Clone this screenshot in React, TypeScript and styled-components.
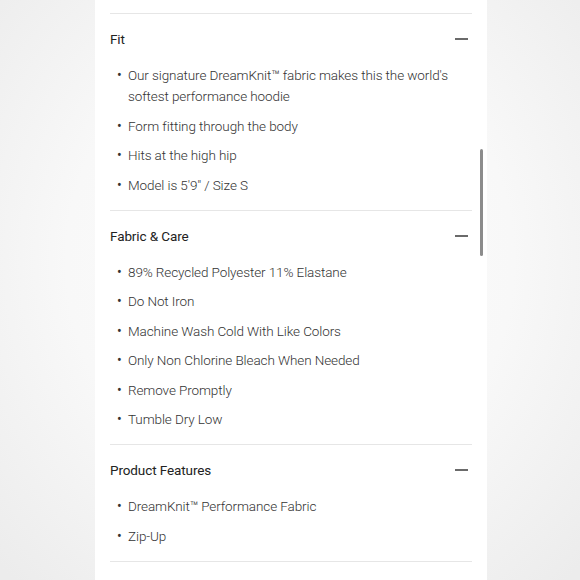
import styled, { createGlobalStyle } from 'styled-components'

const GlobalStyle = createGlobalStyle`
  html, body {
    margin: 0;
    padding: 0;
  }
  body {
    font-family: Roboto, 'Noto Sans', 'Liberation Sans', sans-serif;
    -webkit-font-smoothing: antialiased;
  }
`

const Backdrop = styled.div`
  width: 580px;
  height: 580px;
  overflow: hidden;
  display: flex;
  justify-content: center;
  background: radial-gradient(
    ellipse 70% 75% at 50% 45%,
    #fdfdfd 0%,
    #f8f8f8 55%,
    #ececec 100%
  );
`

const Panel = styled.div`
  position: relative;
  width: 362px;
  margin-left: 2px;
  padding: 13px 15px 0;
  background: #fff;
`

const Scrollbar = styled.div`
  position: absolute;
  right: 4px;
  top: 149px;
  width: 3px;
  height: 107px;
  border-radius: 2px;
  background: #8c8c8c;
`

const Section = styled.section`
  border-top: 1px solid #e6e6e6;
`

const Header = styled.div`
  height: 50px;
  display: flex;
  align-items: center;
  justify-content: space-between;
  padding-right: 4px;
  font-size: 13.5px;
  letter-spacing: -0.1px;
  color: #222;
`

const Minus = styled.span`
  display: block;
  width: 13px;
  height: 2px;
  background: #6a6a6a;
`

const List = styled.ul`
  list-style: none;
  margin: 0;
  padding: 1px 0 14px;
`

const Item = styled.li`
  position: relative;
  padding-left: 18px;
  margin-bottom: 8.5px;
  font-size: 13.5px;
  font-weight: 300;
  letter-spacing: -0.1px;
  line-height: 21px;
  color: #333;

  &:last-child {
    margin-bottom: 0;
  }

  &::before {
    content: '•';
    position: absolute;
    left: 7px;
    top: 0;
    font-size: 14px;
    font-weight: 400;
    color: #333;
  }
`

const sections = [
  {
    title: 'Fit',
    items: [
      'Our signature DreamKnit™ fabric makes this the world\'s softest performance hoodie',
      'Form fitting through the body',
      'Hits at the high hip',
      'Model is 5\'9" / Size S',
    ],
  },
  {
    title: 'Fabric & Care',
    items: [
      '89% Recycled Polyester 11% Elastane',
      'Do Not Iron',
      'Machine Wash Cold With Like Colors',
      'Only Non Chlorine Bleach When Needed',
      'Remove Promptly',
      'Tumble Dry Low',
    ],
  },
  {
    title: 'Product Features',
    items: ['DreamKnit™ Performance Fabric', 'Zip-Up'],
  },
]

export default function App() {
  return (
    <>
      <GlobalStyle />
      <Backdrop>
        <Panel>
          {sections.map((s) => (
            <Section key={s.title}>
              <Header>
                {s.title}
                <Minus />
              </Header>
              <List>
                {s.items.map((it) => (
                  <Item key={it}>{it}</Item>
                ))}
              </List>
            </Section>
          ))}
          <Section />
          <Scrollbar />
        </Panel>
      </Backdrop>
    </>
  )
}
